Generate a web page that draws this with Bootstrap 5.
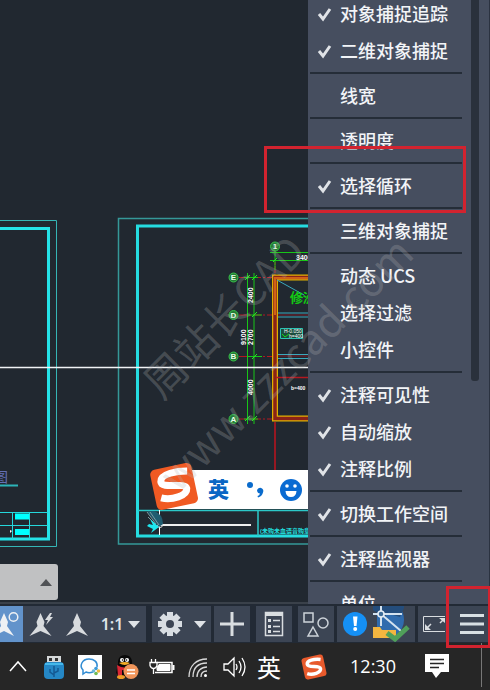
<!DOCTYPE html>
<html lang="zh-CN">
<head>
<meta charset="utf-8">
<meta name="viewport" content="width=device-width, initial-scale=1">
<title>CAD 状态栏自定义</title>
<link href="https://cdn.jsdelivr.net/npm/bootstrap@5.3.0/dist/css/bootstrap.min.css" rel="stylesheet">
<style>
  body { font-family: "Noto Sans", "Noto Sans CJK SC", sans-serif; background: #212830; }
  .cad-canvas { background: #212830; border-bottom: 2px solid #3a414a; min-width: 0; }
  .cad-drawing { position: absolute; left: 0; top: 0; }
  .cad-drawing text { font-family: "Liberation Sans", "Noto Sans CJK SC", sans-serif; }
  .ime-bar text { font-family: "Noto Sans CJK SC", sans-serif; }
  .command-history { position: absolute; left: 0; bottom: 2px; width: 58px; height: 36px; background: #c0c1c2; border-radius: 0 3px 3px 0; padding-right: 5px; }
  .watermark { position: absolute; left: 0; top: 0; z-index: 4; pointer-events: none; }
  .watermark text { font-family: "Noto Sans CJK SC", sans-serif; fill: #b4b4b4; fill-opacity: .27; }

  .custom-menu { width: 182px; background: #464e5f; border-right: 1px solid #2b3240; }
  .menu-view { position: absolute; inset: 0; overflow: hidden; }
  .menu-items { width: 155px; margin-top: -5px; }
  .menu-entry { height: 37px; padding: 0 0 0 8px; font-family: "Noto Sans CJK SC", sans-serif; font-size: 18px; line-height: 37px; font-weight: 500; color: #f2f4f7; white-space: nowrap; }
  .menu-entry:hover { color: #fff; background: #525b6d; }
  .menu-tick { width: 24px; height: 18px; flex: none; display: flex; align-items: center; }
  .menu-rule { height: 2px; margin: 3px 1px 3px 2px; background: #252d38; opacity: 1; border: 0; }
  .menu-thumb { width: 8px; height: 381px; margin-left: 8px; background: #2a313c; border-radius: 0 0 3px 3px; }

  .callout { position: absolute; border: 3px solid #d2232f; pointer-events: none; z-index: 5; }
  .callout-cycling { left: -44px; right: 23px; top: 146px; height: 67px; }
  .callout-more { width: 45px; right: -1px; top: -20px; height: 62px; }

  .status-bar { height: 39px; padding: 2px 0 1px; background: #222a35; }
  .status-group { background: #3c4554; display: flex; margin-right: 6px; }
  .status-group.near { margin-right: 3px; }
  .status-group:last-child { margin-right: 0; }
  .tool { border: 0; padding: 0; background: transparent; color: #dfe3e7; display: flex; align-items: center; justify-content: center; height: 36px; }
  .tool-on { background: #6293cb; }
  .scale-tool { font-family: "Noto Sans", sans-serif; font-size: 16px; font-weight: 600; gap: 5px; }
  .w-23 { width: 23px; } .w-36 { width: 36px; } .w-51 { width: 51px; }

  .task-bar { height: 47px; background: #262626; color: #fff; }
  .tray { border: 0; padding: 0; background: transparent; color: #fff; display: flex; align-items: center; justify-content: center; flex: none; height: 47px; width: 36px; }
  .lang-tool { font-family: "Noto Sans CJK SC", sans-serif; font-size: 24px; width: 34px; }
  .tray-wide { width: 56px; }
  .clock { font-family: "Open Sans", sans-serif; font-size: 18px; width: 56px; }
  .desktop-edge { width: 1px; height: 44px; background: #777; }
</style>
</head>
<body>
<div class="d-flex flex-column vh-100 overflow-hidden position-relative">

  <main class="d-flex flex-grow-1">
    <section class="cad-canvas position-relative overflow-hidden flex-grow-1" aria-label="绘图区">
      <svg class="cad-drawing" width="308" height="604" viewBox="0 0 308 604" fill="none">
        <!-- left sheet -->
        <g>
          <path d="M0 220.500H56.500V546.500H0" stroke="#35b5b5"/>
          <path d="M0 228.500H48.500V539H0" stroke="#25e3e8" stroke-width="3"/>
          <path d="M0 512.500H48M0 525.500H48M12.500 512V539M29.500 512V539" stroke="#25d8dc"/>
          <path d="M15 513.500h14v6H15zM15 529h14v6H15z" fill="#0ff"/>
          <path d="M10 530l2 1-2 2z" fill="#fff"/>
          <path d="M0 485.500H18" stroke="#2cb4b8" stroke-width="2"/>
          <text x="-6" y="482" font-size="14" fill="#6470b4">图</text>
        </g>
        <!-- right sheet -->
        <path d="M308 218.500H118.500V544H308" stroke="#359898" stroke-width="1.500"/>
        <path d="M308 226H137.500V536H308" stroke="#25dce0" stroke-width="3"/>
        <path d="M138 510.500H308M258 510V536" stroke="#2cc8c8" stroke-width="1.500"/>
        <path d="M159.500 510V535" stroke="#fff"/>
        <path d="M159 525H251" stroke="#eee" stroke-width="2"/>
        <circle cx="160" cy="525" r="2.500" stroke="#ddd"/>
        <path d="M147 511h7q9 3 9 13l-4 3z" fill="#205c70"/>
        <path d="M147 512l9 12M150 512l9 13M148 517l7 7" stroke="#7e9aa0"/>
        <path d="M149 524l4 1-3-6 9 8-8 6 2-4-6-3z" fill="#1ee7ef"/>
        <text x="260" y="533" font-size="6" font-weight="bold" fill="#20dddd">(未购未血语音购章北语</text>

        <!-- axes and dimensions -->
        <g stroke="#b31820">
          <path d="M239 277.500H273M239 315H273M239 356.500H273M239 419H273" stroke-dasharray="8 2 2 2"/>
          <path d="M275 262V275" stroke-dasharray="3 1"/>
          <path d="M275 422V470" stroke="#961822" stroke-width="2"/>
        </g>
        <path d="M247.500 273V424M254 273V424M270 252.500H308M270 260.500H308M275 250V270M244 277.500h14M248 315h14M248 356.500h14M244 419h14" stroke="#18c518"/>
        <path d="M245 280l5-5M252 280l5-5M252 317l5-5M252 359l5-5M245 421l5-5M252 421l5-5M273 262l4-4" stroke="#20ee20"/>
        <g fill="#267b36" stroke="#37c24a">
          <circle cx="275" cy="246.500" r="4.500"/><circle cx="233.500" cy="277.500" r="4.500"/><circle cx="233.500" cy="315" r="4.500"/><circle cx="233.500" cy="356.500" r="4.500"/><circle cx="233.500" cy="419" r="4.500"/>
        </g>
        <g fill="#e8ffe8" font-size="8" font-weight="bold" text-anchor="middle">
          <text x="275" y="249">1</text><text x="233.500" y="280">E</text><text x="233.500" y="318">D</text><text x="233.500" y="359">B</text><text x="233.500" y="422">A</text>
        </g>
        <g fill="#fff" font-size="7" font-weight="bold">
          <text x="296" y="260">3400</text>
          <text transform="translate(253 303) rotate(-90)">2400</text>
          <text transform="translate(253 345) rotate(-90)">2700</text>
          <text transform="translate(246 345) rotate(-90)">9100</text>
          <text transform="translate(253 395) rotate(-90)">4000</text>
          <text x="291" y="390" font-size="5">b=400</text>
        </g>
        <!-- walls -->
        <path d="M308 277.500H275V418.500H308" stroke="#e0b000" stroke-width="6"/>
        <path d="M308 277.500H275V418.500H308" stroke="#8a2218" stroke-width="3.500"/>
        <path d="M308 278H275V315" stroke="#d06018" stroke-width="2"/>
        <path d="M278 315H308M278 356H308" stroke="#7c1c28"/>
        <path d="M278 313H308M278 317H308M278 354.500H308M278 358.500H308M277 280L304 295" stroke="#3aa8bc"/>
        <path d="M276 377.500H308" stroke="#b31820" stroke-width="1.500"/>
        <text x="290" y="302" font-size="13" fill="#13d513" stroke="#13d513" stroke-width=".4">修洲</text>
        <path d="M280.500 328.500h22v10h-22z" stroke="#2cc4b4" fill="#1b4d3d"/>
        <text x="284" y="333" font-size="5" fill="#fff">H-0.050</text>
        <text x="289" y="338" font-size="5" fill="#fff">h=400</text>
        <path d="M282 334l3 3 4-3" stroke="#1d1"/>
        <path d="M0 367.500H308" stroke="#f1f3f5" stroke-width="1.500"/>

        <!-- floating input-method bar -->
        <g class="ime-bar">
          <path d="M155 470H308V509H160z" fill="#fff"/>
          <g transform="rotate(-12 174 486)">
            <rect x="153" y="466" width="42" height="41" rx="5" fill="#f05a23"/>
            <path d="M190 474C181 472 163 471 162 479C161 487 186 484 186 491C185 498 169 500 159 495" stroke="#fff" stroke-width="7"/>
          </g>
          <text x="208" y="497" font-size="21" font-weight="900" fill="#0a67c4">英</text>
          <circle cx="250" cy="485" r="3" fill="#0a6bcc"/>
          <path d="M257 490.500a3.200 3.200 0 1 1 6 2q-1 4-5 5l-.5-1.500q2-.5 2.500-2.500-2.500 0-3-3z" fill="#0a6bcc"/>
          <circle cx="291" cy="490" r="11" fill="#0a6bd2"/>
          <path d="M285.500 491h11q-.5 6-5.500 6t-5.500-6z" fill="#fff"/>
          <circle cx="287" cy="486" r="1.800" fill="#fff"/><circle cx="295" cy="486" r="1.800" fill="#fff"/>
        </g>
      </svg>
      <button type="button" class="command-history btn d-flex align-items-center justify-content-end" aria-label="命令历史">
        <svg width="12" height="7" viewBox="0 0 12 7"><path d="M0 7L6 0l6 7z" fill="#505255"/></svg>
      </button>
    </section>

    <aside class="custom-menu position-relative flex-shrink-0" aria-label="自定义">
      <div class="menu-view d-flex align-items-start">
        <div class="menu-items">
          <button type="button" class="menu-entry btn rounded-0 border-0 w-100 d-flex align-items-center"><span class="menu-tick"><svg width="18" height="18" viewBox="0 0 18 18"><path d="M3 9l4 5L14 4" fill="none" stroke="#e0e3e7" stroke-width="3"/></svg></span>对象捕捉追踪</button>
          <button type="button" class="menu-entry btn rounded-0 border-0 w-100 d-flex align-items-center"><span class="menu-tick"><svg width="18" height="18" viewBox="0 0 18 18"><path d="M3 9l4 5L14 4" fill="none" stroke="#e0e3e7" stroke-width="3"/></svg></span>二维对象捕捉</button>
          <hr class="menu-rule">
          <button type="button" class="menu-entry btn rounded-0 border-0 w-100 d-flex align-items-center"><span class="menu-tick"></span>线宽</button>
          <hr class="menu-rule">
          <button type="button" class="menu-entry btn rounded-0 border-0 w-100 d-flex align-items-center"><span class="menu-tick"></span>透明度</button>
          <hr class="menu-rule">
          <button type="button" class="menu-entry btn rounded-0 border-0 w-100 d-flex align-items-center"><span class="menu-tick"><svg width="18" height="18" viewBox="0 0 18 18"><path d="M3 9l4 5L14 4" fill="none" stroke="#e0e3e7" stroke-width="3"/></svg></span>选择循环</button>
          <hr class="menu-rule">
          <button type="button" class="menu-entry btn rounded-0 border-0 w-100 d-flex align-items-center"><span class="menu-tick"></span>三维对象捕捉</button>
          <hr class="menu-rule">
          <button type="button" class="menu-entry btn rounded-0 border-0 w-100 d-flex align-items-center"><span class="menu-tick"></span>动态 UCS</button>
          <button type="button" class="menu-entry btn rounded-0 border-0 w-100 d-flex align-items-center"><span class="menu-tick"></span>选择过滤</button>
          <button type="button" class="menu-entry btn rounded-0 border-0 w-100 d-flex align-items-center"><span class="menu-tick"></span>小控件</button>
          <hr class="menu-rule">
          <button type="button" class="menu-entry btn rounded-0 border-0 w-100 d-flex align-items-center"><span class="menu-tick"><svg width="18" height="18" viewBox="0 0 18 18"><path d="M3 9l4 5L14 4" fill="none" stroke="#e0e3e7" stroke-width="3"/></svg></span>注释可见性</button>
          <button type="button" class="menu-entry btn rounded-0 border-0 w-100 d-flex align-items-center"><span class="menu-tick"><svg width="18" height="18" viewBox="0 0 18 18"><path d="M3 9l4 5L14 4" fill="none" stroke="#e0e3e7" stroke-width="3"/></svg></span>自动缩放</button>
          <button type="button" class="menu-entry btn rounded-0 border-0 w-100 d-flex align-items-center"><span class="menu-tick"><svg width="18" height="18" viewBox="0 0 18 18"><path d="M3 9l4 5L14 4" fill="none" stroke="#e0e3e7" stroke-width="3"/></svg></span>注释比例</button>
          <hr class="menu-rule">
          <button type="button" class="menu-entry btn rounded-0 border-0 w-100 d-flex align-items-center"><span class="menu-tick"><svg width="18" height="18" viewBox="0 0 18 18"><path d="M3 9l4 5L14 4" fill="none" stroke="#e0e3e7" stroke-width="3"/></svg></span>切换工作空间</button>
          <hr class="menu-rule">
          <button type="button" class="menu-entry btn rounded-0 border-0 w-100 d-flex align-items-center"><span class="menu-tick"><svg width="18" height="18" viewBox="0 0 18 18"><path d="M3 9l4 5L14 4" fill="none" stroke="#e0e3e7" stroke-width="3"/></svg></span>注释监视器</button>
          <hr class="menu-rule">
          <button type="button" class="menu-entry btn rounded-0 border-0 w-100 d-flex align-items-center"><span class="menu-tick"></span>单位</button>
        </div>
        <div class="menu-thumb"></div>
      </div>
      <div class="callout callout-cycling"></div>
    </aside>
  </main>

  <footer class="status-bar d-flex flex-shrink-0">
    <div class="status-group">
      <button type="button" class="tool tool-on w-23" aria-label="注释可见性">
        <svg width="23" height="36" viewBox="0 0 23 36"><path d="M4 7l4 9-1 4 7 10-10-5-10 5 7-10-1-4z" fill="#eef1f4"/><circle cx="13.500" cy="11" r="4.300" fill="none" stroke="#eef1f4" stroke-width="1.500"/></svg>
      </button>
      <button type="button" class="tool w-36" aria-label="自动缩放">
        <svg width="36" height="36" viewBox="0 0 36 36" fill="#d8dbde"><path d="M17.500 7l4 9-1 4 8 10-11-5-11 5 8-10-1-4z"/><path d="M27 7l-5 7h3l-2 5 7-8h-3l2-4z"/></svg>
      </button>
      <button type="button" class="tool w-36" aria-label="注释比例">
        <svg width="36" height="36" viewBox="0 0 36 36" fill="#d8dbde"><path d="M18 7l4 9-1 4 8 10-11-5-11 5 8-10-1-4z"/></svg>
      </button>
      <button type="button" class="tool scale-tool w-51">1:1 <svg width="12" height="7" viewBox="0 0 12 7"><path d="M0 0h12L6 7z" fill="#dfe3e7"/></svg></button>
    </div>
    <div class="status-group near">
      <button type="button" class="tool w-36" aria-label="切换工作空间">
        <svg width="26" height="26" viewBox="-13 -13 26 26"><g fill="#d8dde2"><circle r="9"/><path d="M-3-12h6v24h-6zM-12-3h24v6h-24z"/><path d="M-3-12h6v24h-6zM-12-3h24v6h-24z" transform="rotate(45)"/></g><circle r="4" fill="#3c4554"/></svg>
      </button>
      <button type="button" class="tool w-23" aria-label="工作空间列表"><svg width="12" height="7" viewBox="0 0 12 7"><path d="M0 0h12L6 7z" fill="#dfe3e7"/></svg></button>
    </div>
    <div class="status-group">
      <button type="button" class="tool w-36" aria-label="注释监视器"><svg width="24" height="24" viewBox="0 0 24 24"><path d="M12 0v24M0 12h24" stroke="#d9dde0" stroke-width="3"/></svg></button>
    </div>
    <div class="status-group">
      <button type="button" class="tool w-36" aria-label="快捷特性"><svg width="20" height="26" viewBox="0 0 20 26" fill="none" stroke="#d9dde0"><path d="M1.500 1.500h17v23h-17z" stroke-width="1.500"/><path d="M2 3.500h16" stroke-width="3"/><path d="M9 9.500h7M9 15.500h7M9 20.500h7" stroke-width="1.500"/><path d="M4 9.500h3M4 15.500h3M4 20.500h3" stroke-width="3"/></svg></button>
    </div>
    <div class="status-group near">
      <button type="button" class="tool w-36" aria-label="隔离对象"><svg width="28" height="28" viewBox="0 0 28 28" fill="none" stroke="#cdd3d9" stroke-width="1.500"><path d="M2 3h9v9H2zM11 17l5 9H6z"/><circle cx="21" cy="13" r="5"/></svg></button>
    </div>
    <div class="status-group near">
      <button type="button" class="tool w-36" aria-label="硬件加速"><svg width="26" height="26" viewBox="0 0 26 26"><circle cx="13" cy="13" r="12" fill="#1590f5"/><path d="M11 5.500h4.500L14.500 15h-2.500z" fill="#fff"/><circle cx="13.200" cy="18" r="2" fill="#fff"/></svg></button>
      <button type="button" class="tool" aria-label="图形状态"><svg width="42" height="36" viewBox="0 0 42 36"><path d="M4 1h22q5 5 5 13 0 9-8 15H4z" fill="#306cae"/><path d="M0 0h13v13L0 4zM13 7l14 4 4-9V0H13z" fill="#244d7c"/><path d="M0 21h7l2 3h14v8H0z" fill="#f3b640"/><path d="M8 0v20M0 8h29M8 8l20 17" stroke="#d3e2ef" stroke-width="2"/><circle cx="8" cy="8" r="3" fill="#3e6d99" stroke="#e5edf5" stroke-width="1.500"/><path d="M14 27l8 6L35 21" fill="none" stroke="#50a05a" stroke-width="5"/></svg></button>
    </div>
    <div class="status-group flex-grow-1 justify-content-between position-relative">
      <button type="button" class="tool w-23 ms-1" aria-label="全屏显示"><svg width="23" height="18" viewBox="0 0 23 18" fill="none" stroke="#d9dde0"><path d="M23 1.500H1.500v15H23"/><path d="M3 9v6h6zM23 8V3h-6z" fill="#d9dde0" stroke="none"/><path d="M4 14l5-5M22 4l-4 4" stroke-width="1.500"/></svg></button>
      <button type="button" class="tool w-36" aria-label="自定义"><svg width="24" height="22" viewBox="0 0 24 22"><path d="M0 2.500h24M0 11h24M0 19.500h24" stroke="#d8dfe3" stroke-width="3"/></svg></button>
      <div class="callout callout-more"></div>
    </div>
  </footer>

  <nav class="task-bar d-flex flex-shrink-0" aria-label="任务栏">
    <button type="button" class="tray" aria-label="显示隐藏的图标"><svg width="20" height="20" viewBox="0 0 20 20"><path d="M2 14l8-9 8 9" fill="none" stroke="#fff" stroke-width="1.500"/></svg></button>
    <button type="button" class="tray" aria-label="USB"><svg width="22" height="26" viewBox="0 0 22 26"><path d="M4 2h14v9H4z" fill="#d5d8d9"/><path d="M6 4h3v3H6zM12 4h3v3h-3z" fill="#333"/><rect x="1" y="8" width="20" height="17" rx="4" fill="#2587c5"/><path d="M2 10h18" stroke="#45b8ea" stroke-width="2"/><path d="M11 23V12M11 21l-4-3v-3M11 19l4-2v-3" fill="none" stroke="#145992" stroke-width="1.500"/></svg></button>
    <button type="button" class="tray" aria-label="企业微信"><svg width="24" height="24" viewBox="0 0 24 24"><path d="M0 0h24v24H0z" fill="#fff"/><path d="M15 17c-3 1-5 1-7 0l-3 2v-4c-4-4-1-11 6-11 5 0 9 3 8 8" fill="none" stroke="#318cd3" stroke-width="1.500"/><circle cx="18" cy="13.500" r="1.800" fill="#3c9bdb"/><circle cx="20.500" cy="16" r="1.800" fill="#efb83d"/><circle cx="18" cy="18.500" r="1.800" fill="#70bc53"/><circle cx="15.500" cy="16" r="1.800" fill="#6cb5d7"/></svg></button>
    <button type="button" class="tray" aria-label="QQ"><svg width="26" height="26" viewBox="0 0 26 26"><path d="M5 10V7q1-6 7-6t7 6v3l3 6-3 3-2 4H7L3 19z" fill="#080808"/><circle cx="9" cy="6" r="2" fill="#fff"/><circle cx="14" cy="6" r="2" fill="#fff"/><circle cx="9.500" cy="6" r=".8"/><circle cx="13.500" cy="6" r=".8"/><path d="M6 9q6-2 11 0-5 4-11 0z" fill="#f4ad26"/><path d="M4 11q8 5 15 0v4q-5 3-10 1v5l-4 1z" fill="#d92735"/><ellipse cx="8" cy="23" rx="4" ry="2" fill="#ef9b27"/><circle cx="18" cy="17.500" r="7.500" fill="#f0955a"/><path d="M14 16h8M14 19.500h8" stroke="#fff" stroke-width="1.500"/></svg></button>
    <button type="button" class="tray" aria-label="电源"><svg width="26" height="20" viewBox="0 0 26 20" fill="none" stroke="#fff"><path d="M8 5.500h15v10H6" stroke-width="1.500"/><path d="M10 7.500h11v6H8v-3z" fill="#fff"/><path d="M24.500 8v5" stroke-width="2"/><path d="M2.500 2v3M6.500 2v3M1 5.500h7v3q-1 3-3.500 3T1 8.500zM4.500 12v5" stroke-width="1.300"/></svg></button>
    <button type="button" class="tray" aria-label="网络"><svg width="22" height="22" viewBox="0 0 22 22" fill="none" stroke="#d8d8d8" stroke-width="1.300"><path d="M2 21C2 10 9 3 20 3M6 21C6 12 11 7 20 7M10 21c0-6 4-10 10-10M14 21c0-4 2-6 6-6"/><circle cx="18.500" cy="19.500" r="1.500" fill="#fff" stroke="none"/></svg></button>
    <button type="button" class="tray" aria-label="音量"><svg width="24" height="22" viewBox="0 0 24 22" fill="none" stroke="#fff" stroke-width="1.300"><path d="M2 8h4l6-6v18l-6-6H2zM14 8q2 3 0 6M17 5q4 6 0 12M20 2q6 9 0 18"/></svg></button>
    <button type="button" class="tray lang-tool">英</button>
    <button type="button" class="tray tray-wide" aria-label="搜狗输入法"><svg width="26" height="26" viewBox="0 0 26 26"><g transform="rotate(-12 13 13)"><rect x="2" y="2" width="22" height="22" rx="3" fill="#e85a2c"/><path d="M21 7C15 5 7 5 7 9s12 3 12 7-9 5-14 2" fill="none" stroke="#fff" stroke-width="3.500"/></g></svg></button>
    <time class="clock d-flex align-items-center justify-content-center ms-auto">12:30</time>
    <button type="button" class="tray tray-wide ms-2" aria-label="通知"><svg width="24" height="25" viewBox="0 0 24 25"><path d="M0 0h24v18h-8l-5 6-4-6H0z" fill="#fff"/><path d="M5 5.500h14M5 9.500h14M5 13.500h9" stroke="#262626" stroke-width="1.300"/></svg></button>
    <div class="desktop-edge ms-3 me-2"></div>
  </nav>

  <svg class="watermark" width="490" height="604" viewBox="0 0 490 604" aria-hidden="true">
    <text transform="translate(162 401) rotate(-45)" font-size="42">周站长CAD</text>
    <text transform="translate(178 494) rotate(-45)" font-size="42">www.zzzcad.com</text>
  </svg>
</div>
<script src="https://cdn.jsdelivr.net/npm/bootstrap@5.3.0/dist/js/bootstrap.bundle.min.js"></script>
</body>
</html>
